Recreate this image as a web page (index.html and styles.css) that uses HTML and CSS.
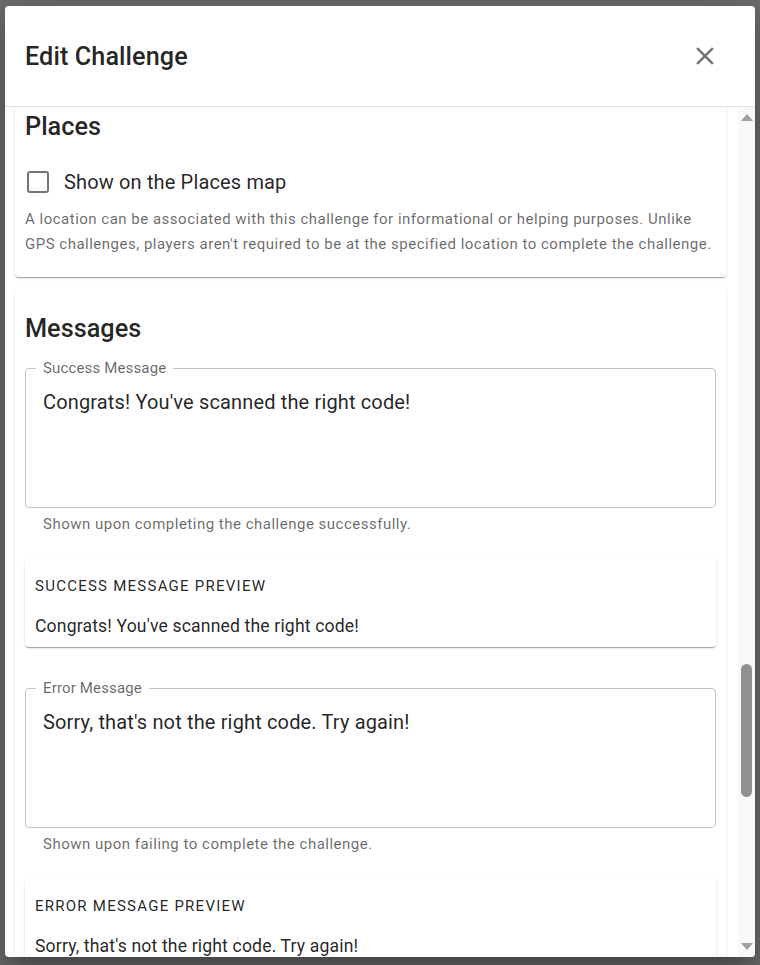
FILE: index.html
```html
<!DOCTYPE html>
<html lang="en">
<head>
<meta charset="utf-8">
<title>Edit Challenge</title>
<link rel="stylesheet" href="styles.css">
</head>
<body>
<div class="dialog" role="dialog" aria-labelledby="dlg-title">
  <header class="dlg-head">
    <h2 class="dlg-title" id="dlg-title">Edit Challenge</h2>
    <button class="close" aria-label="Close">
      <svg viewBox="0 0 24 24" width="30" height="30"><path d="M19 6.41 17.59 5 12 10.59 6.41 5 5 6.41 10.59 12 5 17.59 6.41 19 12 13.41 17.59 19 19 17.59 13.41 12z"/></svg>
    </button>
  </header>
  <div class="dlg-body">
    <div class="scroll">
      <div class="scroll-inner">
        <section class="card places">
          <h3 class="card-title">Places</h3>
          <label class="check-row">
            <span class="checkbox"></span>
            <span class="check-label">Show on the Places map</span>
          </label>
          <p class="caption desc">A location can be associated with this challenge for informational or helping purposes. Unlike GPS challenges, players aren't required to be at the specified location to complete the challenge.</p>
        </section>

        <section class="card messages">
          <h3 class="card-title">Messages</h3>

          <fieldset class="field field-first">
            <legend>Success Message</legend>
            <div class="value">Congrats! You've scanned the right code!</div>
          </fieldset>
          <p class="caption helper">Shown upon completing the challenge successfully.</p>
          <div class="preview">
            <div class="overline">Success message preview</div>
            <div class="preview-text">Congrats! You've scanned the right code!</div>
          </div>

          <fieldset class="field field-next">
            <legend>Error Message</legend>
            <div class="value">Sorry, that's not the right code. Try again!</div>
          </fieldset>
          <p class="caption helper">Shown upon failing to complete the challenge.</p>
          <div class="preview">
            <div class="overline">Error message preview</div>
            <div class="preview-text">Sorry, that's not the right code. Try again!</div>
          </div>
        </section>
      </div>
    </div>
    <div class="scrollbar" aria-hidden="true">
      <span class="arrow arrow-up"></span>
      <div class="track"><div class="thumb"></div></div>
      <span class="arrow arrow-down"></span>
    </div>
  </div>
</div>
</body>
</html>
```

FILE: styles.css
```css
* { box-sizing: border-box; }

html, body {
  margin: 0;
  padding: 0;
  height: 100%;
}

body {
  background: #6b6b6b;
  font-family: Roboto, "Liberation Sans", sans-serif;
  color: rgba(0, 0, 0, 0.87);
  padding: 6px 5px 0;
}

.dialog {
  width: 750px;
  height: 951px;
  background: #fff;
  border-radius: 4px;
  display: flex;
  flex-direction: column;
  overflow: hidden;
  box-shadow: 0 11px 15px -7px rgba(0,0,0,0.2), 0 24px 38px 3px rgba(0,0,0,0.14), 0 9px 46px 8px rgba(0,0,0,0.12);
}

.dlg-head {
  flex: 0 0 101px;
  height: 101px;
  display: flex;
  align-items: center;
  justify-content: space-between;
  padding: 0 35px 0 20px;
  border-bottom: 1px solid #e0e0e0;
}

.dlg-title {
  margin: 0;
  padding-top: 1px;
  font-size: 25.2px;
  font-weight: 500;
  line-height: 32px;
  letter-spacing: 0.1px;
}

.close {
  border: 0;
  background: none;
  padding: 0;
  width: 30px;
  height: 30px;
  display: flex;
  cursor: pointer;
}
.close svg { fill: #757575; }

.dlg-body {
  flex: 1 1 auto;
  display: flex;
  min-height: 0;
}

.scroll {
  flex: 1 1 auto;
  overflow: hidden;
}

.scroll-inner {
  margin-top: -22px;
  padding: 0 12px 0 10px;
}

.card {
  background: #fff;
  border-radius: 4px;
  box-shadow: 0 2px 1px -1px rgba(0,0,0,0.2), 0 1px 1px 0 rgba(0,0,0,0.14), 0 1px 3px 0 rgba(0,0,0,0.12);
  padding: 25px 10px 20px;
}

.card + .card { margin-top: 10px; }

.card-title {
  margin: 0;
  padding-top: 1px;
  font-size: 25.3px;
  font-weight: 500;
  line-height: 32px;
}

.check-row {
  margin-top: 18px;
  height: 42px;
  display: flex;
  align-items: center;
}

.checkbox {
  width: 22px;
  height: 22px;
  margin-left: 2px;
  border: 2px solid #757575;
  border-radius: 3px;
}

.check-label {
  margin-left: 15px;
  font-size: 20px;
  line-height: 30px;
  letter-spacing: 0.15px;
}

.caption {
  margin: 0;
  font-size: 15px;
  line-height: 25px;
  letter-spacing: 0.5px;
  color: rgba(0, 0, 0, 0.6);
}

.desc { margin-top: 4px; }

.field {
  margin: 13px 0 0;
  padding: 0 10px;
  height: 150px;
  border: 1px solid #c4c4c4;
  border-radius: 4px;
  min-width: 0;
}

.field-next { margin-top: 31px; }

.field legend {
  padding: 0 7px;
  font-size: 15px;
  line-height: 20px;
  color: rgba(0, 0, 0, 0.6);
  letter-spacing: 0.15px;
}

.value {
  padding: 8px 7px 0;
  font-size: 20px;
  line-height: 32px;
  letter-spacing: 0.15px;
}

.helper {
  margin-top: 3.5px;
  padding-left: 18px;
}

.preview {
  margin-top: 21.5px;
  background: #fff;
  border-radius: 4px;
  box-shadow: 0 2px 1px -1px rgba(0,0,0,0.2), 0 1px 1px 0 rgba(0,0,0,0.14), 0 1px 3px 0 rgba(0,0,0,0.12);
  padding: 10px 10px 6px;
}

.overline {
  font-size: 15px;
  line-height: 36px;
  letter-spacing: 1.25px;
  text-transform: uppercase;
}

.preview-text {
  margin-top: 7px;
  font-size: 17.6px;
  line-height: 30px;
  letter-spacing: 0.15px;
}

.scrollbar {
  flex: 0 0 17px;
  width: 17px;
  background: #f8f8f8;
  display: flex;
  flex-direction: column;
  align-items: center;
}

.arrow {
  flex: 0 0 auto;
  width: 0;
  height: 0;
  border-left: 6px solid transparent;
  border-right: 6px solid transparent;
}
.arrow-up {
  margin-top: 7px;
  border-bottom: 7px solid #a0a0a0;
}
.arrow-down {
  margin-bottom: 7px;
  border-top: 7px solid #a0a0a0;
}

.track {
  flex: 1 1 auto;
  width: 100%;
  display: flex;
  justify-content: center;
}

.thumb {
  margin-top: 543px;
  width: 11px;
  height: 133px;
  border-radius: 6px;
  background: #909090;
}
```
